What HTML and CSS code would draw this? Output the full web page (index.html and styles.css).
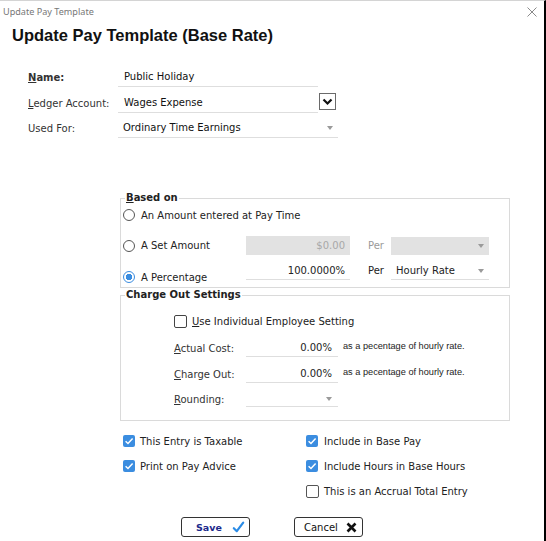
FILE: index.html
```html
<!DOCTYPE html>
<html>
<head>
<meta charset="utf-8">
<link rel="stylesheet" href="styles.css">
</head>
<body>
<div class="window">
  <div class="titlebar">
    <span class="wintitle">Update Pay Template</span>
    <svg class="close" width="10" height="10" viewBox="0 0 10 10"><path d="M0.5 0.5L9.5 9.5M9.5 0.5L0.5 9.5" stroke="#8a8a8a" stroke-width="1"/></svg>
  </div>
  <h1 class="heading">Update Pay Template (Base Rate)</h1>

  <div class="form">
    <div class="row">
      <span class="lbl bold"><u>N</u>ame:</span>
      <div class="field w200">Public Holiday</div>
    </div>
    <div class="row r-ledger">
      <span class="lbl"><u>L</u>edger Account:</span>
      <div class="field w200">Wages Expense</div>
      <span class="dropbtn"><svg width="11" height="8" viewBox="0 0 11 8"><path d="M1.5 1.5L5.5 5.5L9.5 1.5" fill="none" stroke="#111" stroke-width="2.2"/></svg></span>
    </div>
    <div class="row r-used">
      <span class="lbl">Used For:</span>
      <div class="field w220 sel pl5">Ordinary Time Earnings<span class="caret"></span></div>
    </div>
  </div>

  <fieldset class="group based">
    <legend><u>B</u>ased on</legend>
    <div class="brow b1">
      <span class="opt wide"><span class="radio"></span>An Amount entered at Pay Time</span>
    </div>
    <div class="brow b2">
      <span class="opt"><span class="radio"></span>A Set Amount</span>
      <div class="inp dis w104">$0.00</div>
      <span class="per dim">Per</span>
      <div class="sel2 dis"><span class="caret"></span></div>
    </div>
    <div class="brow b3">
      <span class="opt opt3"><span class="radio on"></span>A Percentage</span>
      <div class="inp line w104">100.0000%</div>
      <span class="per">Per</span>
      <div class="sel2 line">Hourly Rate<span class="caret"></span></div>
    </div>
  </fieldset>

  <fieldset class="group charge">
    <legend>Charge Out Settings</legend>
    <div class="crow c1">
      <span class="cbox"></span><span class="clabel"><u>U</u>se Individual Employee Setting</span>
    </div>
    <div class="crow c2">
      <span class="clbl"><u>A</u>ctual Cost:</span>
      <div class="inp line w92 h18">0.00%</div>
      <span class="note">as a pecentage of hourly rate.</span>
    </div>
    <div class="crow c3">
      <span class="clbl"><u>C</u>harge Out:</span>
      <div class="inp line w92 h18">0.00%</div>
      <span class="note">as a pecentage of hourly rate.</span>
    </div>
    <div class="crow c4">
      <span class="clbl"><u>R</u>ounding:</span>
      <div class="inp line w92 h16 selr"><span class="caret"></span></div>
    </div>
  </fieldset>

  <div class="checks">
    <div class="ck"><span class="cb on"><svg width="12" height="12" viewBox="0 0 12 12"><path d="M2.6 6.2L5 8.5L9.6 3.6" fill="none" stroke="#fff" stroke-width="1.5"/></svg></span>This Entry is Taxable</div>
    <div class="ck right"><span class="cb on"><svg width="12" height="12" viewBox="0 0 12 12"><path d="M2.6 6.2L5 8.5L9.6 3.6" fill="none" stroke="#fff" stroke-width="1.5"/></svg></span>Include in Base Pay</div>
    <div class="ck"><span class="cb on"><svg width="12" height="12" viewBox="0 0 12 12"><path d="M2.6 6.2L5 8.5L9.6 3.6" fill="none" stroke="#fff" stroke-width="1.5"/></svg></span>Print on Pay Advice</div>
    <div class="ck right"><span class="cb on"><svg width="12" height="12" viewBox="0 0 12 12"><path d="M2.6 6.2L5 8.5L9.6 3.6" fill="none" stroke="#fff" stroke-width="1.5"/></svg></span>Include Hours in Base Hours</div>
    <div class="ck"></div>
    <div class="ck right"><span class="cb off"></span>This is an Accrual Total Entry</div>
  </div>

  <div class="buttons">
    <div class="btn save"><span>Save</span><svg width="13" height="12" viewBox="0 0 13 12"><path d="M1.8 7.2L4.8 10.2L11.2 1.6" fill="none" stroke="#2a8be6" stroke-width="2.2" stroke-linecap="round" stroke-linejoin="round"/></svg></div>
    <div class="btn cancel"><span>Cancel</span><svg width="11" height="11" viewBox="0 0 11 11"><path d="M1.5 1.5L9.5 9.5M9.5 1.5L1.5 9.5" stroke="#111" stroke-width="2.6"/></svg></div>
  </div>
</div>
</body>
</html>
```

FILE: styles.css
```css
* { box-sizing: border-box; }
html, body { margin: 0; padding: 0; background: #fff; }
.window {
  width: 546px;
  height: 541px;
  border-top: 1px solid #d4d4d4;
  border-right: 2px solid #000;
  font-family: "DejaVu Sans", Verdana, sans-serif;
  font-size: 10px;
  color: #222;
  overflow: hidden;
}
u { text-decoration: underline; text-underline-offset: 1px; }
.titlebar {
  display: flex;
  align-items: center;
  justify-content: space-between;
  height: 21px;
  padding: 0 7px 0 3px;
}
.wintitle {
  font-family: "Noto Sans", "Open Sans", sans-serif;
  font-size: 9.1px;
  color: #777;
}
.heading {
  margin: 3px 0 0 12px;
  font: bold 16.5px/20px "Liberation Sans", Arial, sans-serif;
  color: #111;
}
.form { margin-top: 22px; padding-left: 28px; }
.row { display: flex; align-items: center; height: 20px; }
.r-ledger { margin-top: 6px; }
.r-ledger .dropbtn { align-self: flex-start; }
.r-used { margin-top: 5px; }
.lbl { width: 90px; color: #333; }
.bold { font-weight: bold; }
.field {
  height: 20px;
  border-bottom: 1px solid #dedede;
  padding-left: 6px;
  display: flex;
  align-items: center;
  color: #111;
}
.pl5 { padding-left: 5px; }
.w200 { width: 200px; }
.w220 { width: 220px; }
.sel { justify-content: space-between; padding-right: 5px; }
.caret {
  display: inline-block;
  width: 0; height: 0;
  border-left: 3.5px solid transparent;
  border-right: 3.5px solid transparent;
  border-top: 4px solid #9a9a9a;
}
.dropbtn {
  width: 17px;
  height: 17px;
  margin-left: 1px;
  border: 1px solid #6a6a6a;
  display: flex;
  align-items: center;
  justify-content: center;
}
.group {
  margin: 0 0 0 120px;
  padding: 0;
  width: 390px;
  min-width: 0;
  border: 1px solid #dadada;
}
.group legend {
  font-weight: bold;
  line-height: 14px;
  padding: 0 1px;
  margin-left: 4px;
  color: #222;
}
.based { margin-top: 53px; }
.brow { display: flex; align-items: center; padding-left: 2px; }
.b1 { height: 20px; }
.b2 { height: 19px; margin-top: 11px; }
.b3 { height: 25px; margin-top: 7px; align-items: flex-start; }
.opt { width: 123px; display: flex; align-items: center; height: 20px; white-space: nowrap; }
.opt.wide { width: auto; }
.opt3 { margin-top: 5px; }
.radio {
  width: 12px; height: 12px;
  border: 1px solid #555;
  border-radius: 50%;
  margin-right: 6px;
  flex: none;
}
.radio.on {
  border-color: #3b8de0;
  background: radial-gradient(circle, #3b8de0 0 3px, #fff 3.5px);
}
.inp {
  display: flex;
  align-items: center;
  justify-content: flex-end;
  padding-right: 5px;
  color: #222;
}
.w104 { width: 104px; }
.w92 { width: 92px; padding-right: 6px; }
.dis { background: #e2e2e2; color: #a8a8a8; height: 19px; }
.line { border-bottom: 1px solid #dedede; height: 18px; }
.h18 { height: 18px; }
.h16 { height: 16px; }
.per { width: 23px; margin-left: 18px; color: #222; }
.b3 .per { line-height: 18px; }
.per.dim { color: #9a9a9a; }
.sel2 {
  width: 98px;
  height: 18px;
  display: flex;
  align-items: center;
  justify-content: space-between;
  padding: 0 5px 0 5px;
  color: #222;
}
.sel2.dis { justify-content: flex-end; }
.charge { margin-top: 0; padding-bottom: 13px; }
.crow { display: flex; align-items: center; padding-left: 53px; }
.c1 { height: 20px; margin-top: 9px; }
.c2 { height: 18px; margin-top: 8px; }
.c3 { height: 18px; margin-top: 8px; }
.c4 { height: 16px; margin-top: 8px; }
.cbox {
  width: 13px; height: 13px;
  border: 1px solid #444;
  border-radius: 2px;
  margin-right: 5px;
}
.clabel { color: #222; }
.clbl { width: 72px; color: #333; }
.c2 .clbl, .c3 .clbl { padding-top: 1px; }
.note {
  margin-left: 5px;
  font-family: "Liberation Sans", Arial, sans-serif;
  font-size: 9.2px;
  color: #222;
  align-self: flex-start;
  line-height: 14px;
}
.selr { justify-content: flex-end; padding-right: 6px; }
.checks {
  margin: 10px 0 0 123px;
  display: grid;
  grid-template-columns: 183px auto;
  grid-auto-rows: 20px;
  row-gap: 5px;
}
.ck { display: flex; align-items: center; color: #222; }
.cb {
  width: 12px; height: 12px;
  border-radius: 2px;
  margin-right: 5px;
  display: flex;
  flex: none;
}
.right .cb { margin-right: 6px; }
.cb.on { background: #3b8de0; }
.cb.off { width: 13px; height: 13px; border: 1px solid #555; margin-right: 5px; }
.buttons {
  margin: 16px 0 0 181px;
  display: flex;
  gap: 44px;
}
.btn {
  width: 69px;
  height: 20px;
  border: 1px solid #333;
  border-radius: 3px;
  display: flex;
  align-items: center;
  justify-content: space-between;
}
.save { padding: 0 4px 0 14px; }
.save span { color: #1c2a8c; font-weight: bold; font-size: 9.5px; }
.cancel { padding: 0 5px 0 9px; }
.cancel span { color: #111; }
```
